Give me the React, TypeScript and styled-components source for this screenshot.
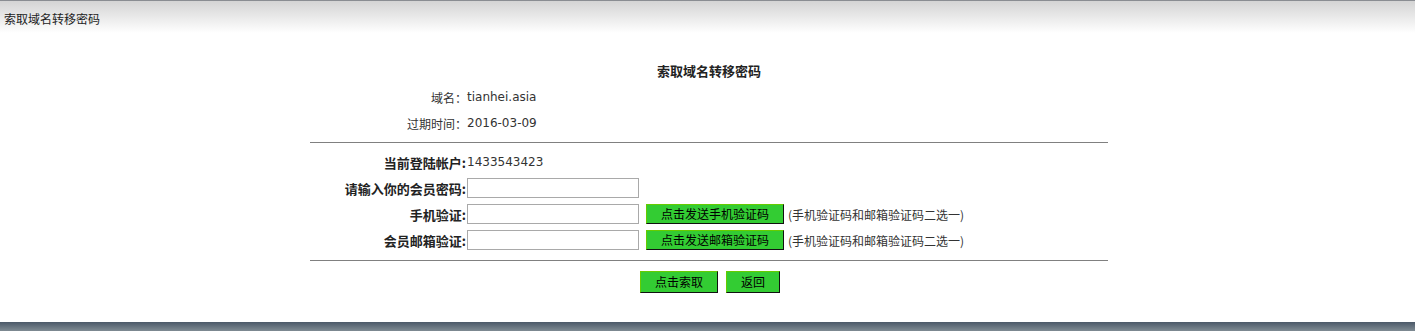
import React from "react";
import styled, { createGlobalStyle } from "styled-components";

const Global = createGlobalStyle`
  html, body { margin: 0; padding: 0; background: #fff; }
  body { font-family: "DejaVu Sans", "Noto Sans CJK SC", sans-serif; font-size: 12px; color: #333; }
`;

const Page = styled.div`
  min-height: 100vh;
  display: flex;
  flex-direction: column;
`;

const Header = styled.div`
  height: 38px;
  border-top: 1px solid #8a8d92;
  background: linear-gradient(to bottom, #d4d4d4 0px, #f4f4f4 24px, #ffffff 32px);
  padding: 10px 0 0 4px;
  box-sizing: border-box;
  font-family: "Noto Sans CJK SC", sans-serif;
  font-size: 12px;
  line-height: 16px;
  color: #222;
`;

const Main = styled.div`
  flex: 1;
  display: flex;
  justify-content: center;
  padding: 20px 0 0 3px;
`;

const Form = styled.div`
  width: 798px;
  display: flex;
  flex-direction: column;
`;

const Title = styled.div`
  height: 26px;
  line-height: 26px;
  text-align: center;
  font-family: "Noto Sans CJK SC", sans-serif;
  font-weight: bold;
  font-size: 13px;
  color: #222;
`;

const Row = styled.div`
  display: grid;
  grid-template-columns: 157px 1fr;
  align-items: center;
  height: 26px;
`;

const Label = styled.div<{ $bold?: boolean }>`
  text-align: right;
  font-family: "Noto Sans CJK SC", sans-serif;
  font-size: ${(p) => (p.$bold ? "13px" : "12px")};
  font-weight: ${(p) => (p.$bold ? "bold" : "normal")};
  color: ${(p) => (p.$bold ? "#222" : "#333")};
  padding-right: ${(p) => (p.$bold ? "1px" : "0")};
`;

const Value = styled.div`
  display: flex;
  align-items: center;
  font-size: 12px;
  color: #333;
`;

const Divider = styled.div<{ $top?: number }>`
  height: 1px;
  background: #808080;
  margin: ${(p) => p.$top ?? 6}px 0 6px;
`;

const Input = styled.input`
  width: 172px;
  height: 20px;
  box-sizing: border-box;
  border: 1px solid #a9a9a9;
  margin: 0;
  padding: 0 2px;
  font-size: 12px;
  background: #fff;
`;

const GreenButton = styled.button<{ $h?: number }>`
  height: ${(p) => p.$h ?? 20}px;
  padding: 0 14px;
  margin: 0;
  background: #33cc33;
  border: 1px solid;
  border-color: #66cc00 #111 #111 #66cc00;
  font-family: "Noto Sans CJK SC", sans-serif;
  font-size: 12px;
  line-height: 1;
  color: #000;
  cursor: pointer;
`;

const SendButton = styled(GreenButton)`
  margin-left: 7px;
`;

const Note = styled.span`
  margin-left: 4px;
  font-family: "Noto Sans CJK SC", sans-serif;
  font-size: 12px;
  color: #333;
`;

const Actions = styled.div`
  display: flex;
  justify-content: center;
  gap: 8px;
  padding: 4px 0 0 2px;
`;

const Footer = styled.div`
  height: 9px;
  background: linear-gradient(to bottom, #4b5968, #7f8b93);
`;

export default function App() {
  return (
    <Page>
      <Global />
      <Header>索取域名转移密码</Header>
      <Main>
        <Form>
          <Title>索取域名转移密码</Title>
          <Row>
            <Label>域名：</Label>
            <Value>tianhei.asia</Value>
          </Row>
          <Row>
            <Label>过期时间：</Label>
            <Value>2016-03-09</Value>
          </Row>
          <Divider />
          <Row>
            <Label $bold>当前登陆帐户:</Label>
            <Value>1433543423</Value>
          </Row>
          <Row>
            <Label $bold>请输入你的会员密码:</Label>
            <Value>
              <Input type="password" />
            </Value>
          </Row>
          <Row>
            <Label $bold>手机验证:</Label>
            <Value>
              <Input type="text" />
              <SendButton>点击发送手机验证码</SendButton>
              <Note>(手机验证码和邮箱验证码二选一)</Note>
            </Value>
          </Row>
          <Row>
            <Label $bold>会员邮箱验证:</Label>
            <Value>
              <Input type="text" />
              <SendButton>点击发送邮箱验证码</SendButton>
              <Note>(手机验证码和邮箱验证码二选一)</Note>
            </Value>
          </Row>
          <Divider $top={7} />
          <Actions>
            <GreenButton $h={22}>点击索取</GreenButton>
            <GreenButton $h={22}>返回</GreenButton>
          </Actions>
        </Form>
      </Main>
      <Footer />
    </Page>
  );
}
